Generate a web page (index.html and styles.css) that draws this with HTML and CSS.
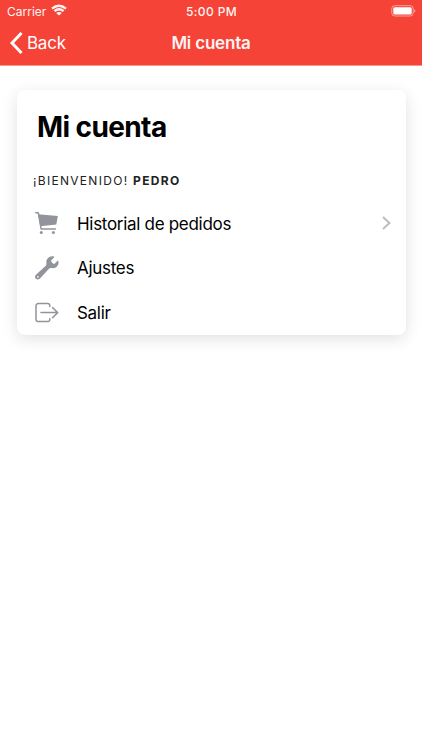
FILE: index.html
```html
<!DOCTYPE html>
<html lang="es">
<head>
<meta charset="utf-8">
<meta name="viewport" content="width=device-width, initial-scale=1">
<title>Mi cuenta</title>
<link rel="stylesheet" href="styles.css">
</head>
<body>
<header class="header">
  <div class="status">
    <div class="carrier"><span>Carrier</span>
      <svg class="wifi" width="16" height="12" viewBox="0 0 16 12" fill="none" stroke="currentColor" stroke-width="2.3"><path d="M1 4.7Q8-1.3 15 4.7M3.4 7.2Q8 3.3 12.6 7.2"/><path d="M8 11.6L5.2 9Q8 7 10.8 9Z" fill="currentColor" stroke="none"/></svg>
    </div>
    <time class="clock">5:00 PM</time>
    <svg class="battery" width="25" height="12" viewBox="0 0 25 12"><rect x=".8" y=".7" width="21.4" height="10.3" rx="3" fill="none" stroke="#fff" stroke-opacity=".5"/><rect x="2.3" y="2.2" width="18.4" height="7.3" rx="1.5" fill="#fff"/><path d="M23.3 4.2Q25.6 5.9 23.3 7.6Z" fill="#fff" opacity=".6"/></svg>
  </div>
  <nav class="toolbar">
    <a class="back"><svg width="13" height="22" viewBox="0 0 13 22" fill="none" stroke="currentColor" stroke-width="3"><path d="M11.5 1L2 11L11.5 21"/></svg><span>Back</span></a>
    <div class="toolbar-title">Mi cuenta</div>
  </nav>
</header>
<main class="card">
  <h1 class="title">Mi cuenta</h1>
  <p class="welcome">¡BIENVENIDO! <b>PEDRO</b></p>
  <ul class="menu">
    <li class="item">
      <svg class="icon" width="26" height="26" viewBox="0 0 26 26"><path d="M1.8 1.8H4.3L7.2 18.1H21.4" fill="none" stroke="currentColor" stroke-width="1.5" stroke-linecap="round" stroke-linejoin="round"/><path d="M4.2 3.2L23.8 4.9L22.3 13.6L6.2 15.2Z" fill="currentColor"/><circle cx="7.3" cy="21.5" r="1.5" fill="currentColor"/><circle cx="19.4" cy="21.5" r="1.5" fill="currentColor"/></svg>
      <span class="label history">Historial de pedidos</span>
      <svg class="chevron" width="9" height="14" viewBox="0 0 9 14" fill="none" stroke="currentColor" stroke-width="1.9"><path d="M1 1L7.5 7L1 13"/></svg>
    </li>
    <li class="item">
      <svg class="icon" width="26" height="26" viewBox="0 0 26 26"><path fill="currentColor" fill-rule="evenodd" d="M19.8 1.4C15.7.3 11.8 3.6 12.4 7.9C12.6 9.5 12.1 10.4 11.2 11.3L2 19.8C.7 21 .7 22.6 1.8 23.7C3 24.9 4.8 24.8 6 23.4L14.5 14.2C15.4 13.3 16.3 12.9 17.8 13.1C22.2 13.7 25.4 9.8 24.3 5.9C24.2 5.5 23.9 5.5 23.6 5.8L20.3 8.9C19.4 9.3 17.1 7.2 17.2 6.1C17.2 5.6 17.4 5.2 17.8 4.8L20.2 2.2C20.5 1.8 20.3 1.5 19.8 1.4ZM3.9 21.1A.8.8 0 1 0 3.9 22.7A.8.8 0 1 0 3.9 21.1Z"/></svg>
      <span class="label settings">Ajustes</span>
    </li>
    <li class="item">
      <svg class="icon" width="26" height="26" viewBox="0 0 26 26" fill="none" stroke="currentColor" stroke-width="1.5" stroke-linecap="round" stroke-linejoin="round"><path d="M15.8 6.4V5.8A2.2 2.2 0 0 0 13.6 3.6H4.2A2.2 2.2 0 0 0 2 5.8V19.4A2.2 2.2 0 0 0 4.2 21.6H13.6A2.2 2.2 0 0 0 15.8 19.4V18.8M7 12.6H23.5M18.5 7.5L23.7 12.6L18.5 17.7"/></svg>
      <span class="label logout">Salir</span>
    </li>
  </ul>
</main>
</body>
</html>
```
FILE: styles.css
```css
* { box-sizing: border-box; }

body {
  min-height: 750px;
  margin: 0;
  background: #fff;
  color: #000;
  font-family: Inter, "Liberation Sans", sans-serif;
}

.header {
  height: 66px;
  background: #f54337;
  border-bottom: 1px solid #f8958e;
  color: #fff;
}

.status {
  display: grid;
  grid-template-columns: 1fr auto 1fr;
  height: 22px;
  padding: 0 6px 0 7px;
  align-items: center;
  font-size: 12px;
}

.carrier { display: flex; align-items: center; gap: 5px; letter-spacing: 0; opacity: .94; }
.wifi { margin-top: -2px; }
.clock { font-weight: 500; letter-spacing: .4px; opacity: .94; }
.battery { justify-self: end; margin-top: -1px; }

.toolbar {
  display: grid;
  grid-template-columns: 1fr auto 1fr;
  height: 42px;
  padding: 0 10px;
  align-items: center;
  font-size: 17px;
}

.back { display: flex; align-items: center; gap: 4px; letter-spacing: -.25px; }
.toolbar-title { font-weight: 600; font-size: 17px; letter-spacing: -.2px; opacity: .94; }

.card {
  width: 389px;
  height: 245px;
  margin: 24px 0 0 16.5px;
  border-radius: 8px;
  background: #fff;
  box-shadow: 0 4px 16px rgba(0, 0, 0, .12);
  overflow: hidden;
}

.title {
  margin: 0;
  padding: 20px 20.5px 0;
  font-size: 28px;
  line-height: 34px;
  font-weight: 700;
  letter-spacing: -.6px;
}

.welcome {
  margin: 29px 0 0 16.5px;
  color: #222;
  font-size: 12px;
  line-height: 16px;
  letter-spacing: 1.3px;
}

.menu { margin: 12.4px 0 0; padding: 0; list-style: none; }
.item { display: flex; height: 44.7px; padding: 0 14.5px 0 17.5px; align-items: center; }
.icon { flex: none; color: #92949c; }
.label { margin-left: 17px; font-size: 17px; letter-spacing: -.3px; }
.chevron { margin-left: auto; margin-top: -1px; color: #bcbcbe; }
```
